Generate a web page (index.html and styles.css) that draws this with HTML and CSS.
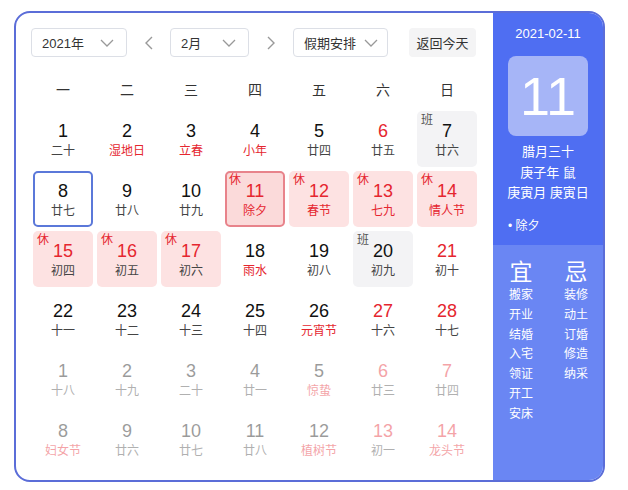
FILE: index.html
```html
<!DOCTYPE html>
<html lang="zh">
<head>
<meta charset="utf-8">
<link rel="stylesheet" href="styles.css">
</head>
<body>
<div class="card">
  <div class="main">
    <div class="controls">
      <div class="select year"><span>2021年</span><svg class="chev" viewBox="0 0 14 8" width="14" height="8"><path d="M1 1l6 6 6-6" fill="none" stroke="#999" stroke-width="1.3"/></svg></div>
      <div class="arrow"><svg viewBox="0 0 8 14" width="8" height="14"><path d="M7 1L1 7l6 6" fill="none" stroke="#999" stroke-width="1.4"/></svg></div>
      <div class="select month"><span>2月</span><svg class="chev" viewBox="0 0 14 8" width="14" height="8"><path d="M1 1l6 6 6-6" fill="none" stroke="#999" stroke-width="1.3"/></svg></div>
      <div class="arrow arrow-next"><svg viewBox="0 0 8 14" width="8" height="14"><path d="M1 1l6 6-6 6" fill="none" stroke="#999" stroke-width="1.4"/></svg></div>
      <div class="select holiday"><span>假期安排</span><svg class="chev" viewBox="0 0 14 8" width="14" height="8"><path d="M1 1l6 6 6-6" fill="none" stroke="#999" stroke-width="1.3"/></svg></div>
      <div class="today-btn">返回今天</div>
    </div>
    <div class="weekdays">
      <div>一</div><div>二</div><div>三</div><div>四</div><div>五</div><div>六</div><div>日</div>
    </div>
    <div class="grid">
      <div class="cell"><span class="num">1</span><span class="lunar">二十</span></div>
      <div class="cell"><span class="num">2</span><span class="lunar red">湿地日</span></div>
      <div class="cell"><span class="num">3</span><span class="lunar red">立春</span></div>
      <div class="cell"><span class="num">4</span><span class="lunar red">小年</span></div>
      <div class="cell"><span class="num">5</span><span class="lunar">廿四</span></div>
      <div class="cell"><span class="num red">6</span><span class="lunar">廿五</span></div>
      <div class="cell work"><span class="tag">班</span><span class="num">7</span><span class="lunar">廿六</span></div>

      <div class="cell selected"><span class="num">8</span><span class="lunar">廿七</span></div>
      <div class="cell"><span class="num">9</span><span class="lunar">廿八</span></div>
      <div class="cell"><span class="num">10</span><span class="lunar">廿九</span></div>
      <div class="cell rest today"><span class="tag">休</span><span class="num red">11</span><span class="lunar red">除夕</span></div>
      <div class="cell rest"><span class="tag">休</span><span class="num red">12</span><span class="lunar red">春节</span></div>
      <div class="cell rest"><span class="tag">休</span><span class="num red">13</span><span class="lunar red">七九</span></div>
      <div class="cell rest"><span class="tag">休</span><span class="num red">14</span><span class="lunar red">情人节</span></div>

      <div class="cell rest"><span class="tag">休</span><span class="num red">15</span><span class="lunar">初四</span></div>
      <div class="cell rest"><span class="tag">休</span><span class="num red">16</span><span class="lunar">初五</span></div>
      <div class="cell rest"><span class="tag">休</span><span class="num red">17</span><span class="lunar">初六</span></div>
      <div class="cell"><span class="num">18</span><span class="lunar red">雨水</span></div>
      <div class="cell"><span class="num">19</span><span class="lunar">初八</span></div>
      <div class="cell work"><span class="tag">班</span><span class="num">20</span><span class="lunar">初九</span></div>
      <div class="cell"><span class="num red">21</span><span class="lunar">初十</span></div>

      <div class="cell"><span class="num">22</span><span class="lunar">十一</span></div>
      <div class="cell"><span class="num">23</span><span class="lunar">十二</span></div>
      <div class="cell"><span class="num">24</span><span class="lunar">十三</span></div>
      <div class="cell"><span class="num">25</span><span class="lunar">十四</span></div>
      <div class="cell"><span class="num">26</span><span class="lunar red">元宵节</span></div>
      <div class="cell"><span class="num red">27</span><span class="lunar">十六</span></div>
      <div class="cell"><span class="num red">28</span><span class="lunar">十七</span></div>

      <div class="cell other"><span class="num">1</span><span class="lunar">十八</span></div>
      <div class="cell other"><span class="num">2</span><span class="lunar">十九</span></div>
      <div class="cell other"><span class="num">3</span><span class="lunar">二十</span></div>
      <div class="cell other"><span class="num">4</span><span class="lunar">廿一</span></div>
      <div class="cell other"><span class="num">5</span><span class="lunar red">惊蛰</span></div>
      <div class="cell other"><span class="num red">6</span><span class="lunar">廿三</span></div>
      <div class="cell other"><span class="num red">7</span><span class="lunar">廿四</span></div>

      <div class="cell other"><span class="num">8</span><span class="lunar red">妇女节</span></div>
      <div class="cell other"><span class="num">9</span><span class="lunar">廿六</span></div>
      <div class="cell other"><span class="num">10</span><span class="lunar">廿七</span></div>
      <div class="cell other"><span class="num">11</span><span class="lunar">廿八</span></div>
      <div class="cell other"><span class="num">12</span><span class="lunar red">植树节</span></div>
      <div class="cell other"><span class="num red">13</span><span class="lunar">初一</span></div>
      <div class="cell other"><span class="num red">14</span><span class="lunar red">龙头节</span></div>
    </div>
  </div>
  <div class="side">
    <div class="side-top">
      <div class="side-date">2021-02-11</div>
      <div class="big-day">11</div>
      <div class="lunar-info">
        <div>腊月三十</div>
        <div>庚子年 鼠</div>
        <div>庚寅月 庚寅日</div>
      </div>
      <div class="fest">• 除夕</div>
    </div>
    <div class="side-bottom">
      <div class="col">
        <div class="col-head">宜</div>
        <div>搬家</div><div>开业</div><div>结婚</div><div>入宅</div><div>领证</div><div>开工</div><div>安床</div>
      </div>
      <div class="col">
        <div class="col-head">忌</div>
        <div>装修</div><div>动土</div><div>订婚</div><div>修造</div><div>纳采</div>
      </div>
    </div>
  </div>
</div>
</body>
</html>
```
FILE: styles.css
```css
* { box-sizing: border-box; }
body {
  margin: 0;
  background: #fff;
  font-family: "Liberation Sans", "Noto Sans CJK SC", sans-serif;
  color: #333;
}
.card {
  margin: 11px 0 0 14px;
  width: 591px;
  height: 471px;
  border: 2px solid #5b6dd8;
  border-radius: 16px;
  overflow: hidden;
  display: flex;
  background: #fff;
}
.main {
  width: 477px;
  padding: 15px 0 0 15px;
}
.controls {
  display: flex;
  align-items: center;
  height: 29px;
}
.select {
  height: 29px;
  border: 1px solid #dcdfe6;
  border-radius: 4px;
  display: flex;
  align-items: center;
  justify-content: space-between;
  padding: 0 12px 0 10px;
  font-size: 13px;
  color: #333;
}
.year { width: 96px; }
.month { width: 79px; }
.holiday { width: 95px; padding-left: 10px; padding-right: 9px; }
.arrow {
  display: flex;
  align-items: center;
  justify-content: center;
  width: 43px;
  height: 29px;
}
.arrow-next { width: 44px; }
.today-btn {
  margin-left: 21px;
  width: 67px;
  height: 29px;
  background: #f4f4f5;
  border-radius: 4px;
  font-size: 13px;
  color: #333;
  display: flex;
  align-items: center;
  justify-content: center;
}
.weekdays {
  margin-top: 12px;
  display: grid;
  grid-template-columns: repeat(7, 64px);
  height: 40px;
  align-items: center;
  text-align: center;
  font-size: 14px;
  color: #333;
}
.grid {
  display: grid;
  grid-template-columns: repeat(7, 64px);
  grid-auto-rows: 60px;
}
.cell {
  margin: 2px;
  border: 2px solid transparent;
  border-radius: 5px;
  position: relative;
  display: flex;
  flex-direction: column;
  align-items: center;
  padding-top: 8px;
}
.num {
  font-size: 18px;
  line-height: 20px;
  color: #111;
}
.lunar {
  margin-top: 2px;
  font-size: 12px;
  line-height: 16px;
  color: #444;
}
.red { color: #e5262f; }
.tag {
  position: absolute;
  left: 2px;
  top: -1px;
  font-size: 12px;
  line-height: 16px;
  color: #555;
}
.rest { background: #fde2e2; }
.rest .tag { color: #e5262f; }
.today { border-color: #e8838b; background: #fbdada; }
.work { background: #f3f3f5; }
.selected { border-color: #5b78d9; }
.other { opacity: 0.42; }
.side {
  width: 110px;
  display: flex;
  flex-direction: column;
  color: #fff;
}
.side-top {
  height: 232px;
  background: #4f6ef2;
  display: flex;
  flex-direction: column;
  align-items: center;
  padding-top: 12px;
}
.side-date {
  font-size: 13px;
  line-height: 18px;
}
.big-day {
  margin-top: 13px;
  width: 80px;
  height: 80px;
  border-radius: 8px;
  background: #a6b5f7;
  font-size: 54px;
  line-height: 80px;
  text-align: center;
  color: #fff;
}
.lunar-info {
  margin-top: 6px;
  text-align: center;
  font-size: 13px;
  line-height: 20.5px;
}
.fest {
  align-self: flex-start;
  margin-top: 13px;
  margin-left: 15px;
  font-size: 12px;
  line-height: 18px;
}
.side-bottom {
  flex: 1;
  background: #6a86f3;
  display: grid;
  grid-template-columns: 56px 54px;
  padding-top: 13px;
}
.col {
  display: flex;
  flex-direction: column;
  align-items: center;
  font-size: 12px;
  line-height: 19.8px;
}
.col-head {
  font-size: 23px;
  line-height: 28px;
}
```
